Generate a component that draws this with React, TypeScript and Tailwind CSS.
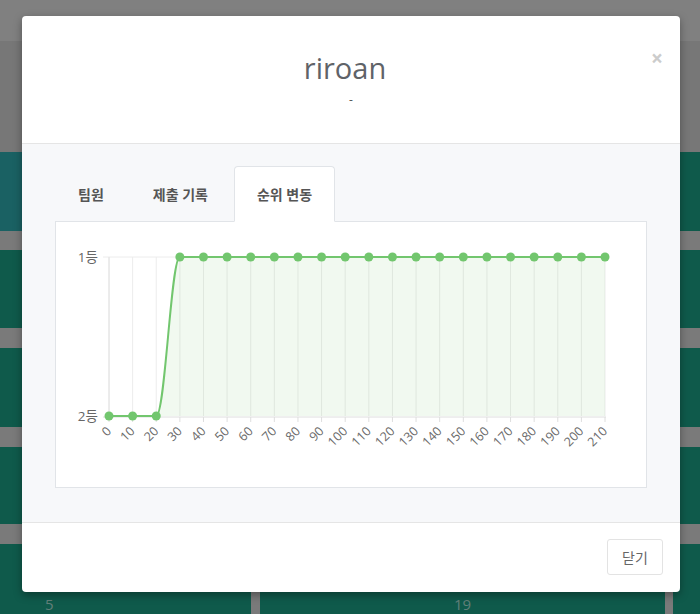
const ticks = Array.from({ length: 22 }, (_, i) => i * 10);
const xAt = (i: number) => 109 + i * 23.62;
const TOP = 257;
const BOT = 416;
const rankY = (i: number) => (i < 3 ? BOT : TOP);

const Cells = ({ first, label }: { first?: boolean; label?: [string, string] }) => (
  <div className="flex gap-[9px] h-full">
    <div className={`w-[251px] h-full ${first ? 'bg-[#1a6163]' : 'bg-[#0f5a4b]'} pl-[45px] pt-[50px] text-[15px] leading-[20px] text-[#62807a]`}>
      {label?.[0]}
    </div>
    <div className="w-[405px] h-full bg-[#0f5a4b] pt-[50px] text-center text-[15px] leading-[20px] text-[#62807a]">
      {label?.[1]}
    </div>
    <div className="ml-[-1px] flex-1 h-full bg-[#0f5a4b]" />
  </div>
);

const RankChart = () => {
  const pts = ticks.map((_, i) => [xAt(i), rankY(i)] as const);
  const x2 = xAt(2);
  const x3 = xAt(3);
  const curve =
    `M${pts[0][0]},${BOT} L${pts[1][0]},${BOT} L${x2},${BOT} ` +
    `C${x2 + 9},${BOT} ${x3 - 9},${TOP} ${x3},${TOP} ` +
    pts.slice(4).map(([x, y]) => `L${x},${y}`).join(' ');
  const area = `${curve} L${xAt(21)},${BOT} L${xAt(0)},${BOT} Z`;

  return (
    <svg width="590" height="265" viewBox="56 222 590 265" className="block">
      {ticks.map((_, i) => (
        <line key={i} x1={xAt(i)} x2={xAt(i)} y1={TOP} y2={BOT} stroke="#ececec" />
      ))}
      <line x1={103} x2={xAt(21)} y1={TOP} y2={TOP} stroke="#ececec" />
      <path d={area} fill="#72c66e" fillOpacity={0.1} />
      <line x1={109} x2={109} y1={TOP} y2={BOT + 1} stroke="#e2e2e2" />
      <line x1={103} x2={xAt(21) + 1} y1={BOT + 1} y2={BOT + 1} stroke="#dedede" />
      {ticks.map((_, i) => (
        <line key={i} x1={xAt(i)} x2={xAt(i)} y1={BOT + 1} y2={BOT + 6} stroke="#dedede" />
      ))}
      <path d={curve} fill="none" stroke="#72c66e" strokeWidth={2} />
      {pts.map(([x, y], i) => (
        <circle key={i} cx={x} cy={y} r={4.5} fill="#72c66e" />
      ))}
      <text x={98} y={TOP + 4.5} textAnchor="end" fontSize={13.5} fill="#666">1등</text>
      <text x={98} y={BOT + 4.5} textAnchor="end" fontSize={13.5} fill="#666">2등</text>
      {ticks.map((t, i) => (
        <text
          key={t}
          x={xAt(i) + 3}
          y={432}
          textAnchor="end"
          fontSize={12.5}
          fill="#6a6a6a"
          transform={`rotate(-45 ${xAt(i) + 3} 432)`}
        >
          {t}
        </text>
      ))}
    </svg>
  );
};

export default function App() {
  return (
    <div className="relative w-[700px] h-[614px] overflow-hidden font-['Open_Sans','Noto_Sans_CJK_KR',sans-serif]">
      <div className="flex flex-col h-full bg-[#7a7a7a]">
        <div className="h-[41px] bg-[#808080]" />
        <div className="h-[112px] bg-[#777777]" />
        <div className="h-[79px]"><Cells first /></div>
        <div className="h-[19px]" />
        <div className="h-[79px]"><Cells /></div>
        <div className="h-[20px]" />
        <div className="h-[79px]"><Cells /></div>
        <div className="h-[20px]" />
        <div className="h-[78px]"><Cells /></div>
        <div className="h-[20px]" />
        <div className="flex-1"><Cells label={['5', '19']} /></div>
      </div>

      <div className="absolute left-[22px] top-[16px] w-[658px] h-[576px] bg-white rounded-[4px] shadow-[0_3px_9px_rgba(0,0,0,0.35)] overflow-hidden flex flex-col">
        <div className="relative h-[128px] border-b border-[#e5e5e5] pt-[35px] text-center">
          <div className="pr-[12px] text-[29px] leading-[34px] text-[#5f6368]">riroan</div>
          <div className="mt-[7px] text-[12px] leading-[16px] text-[#555]">-</div>
          <span className="absolute right-[17px] top-[32px] text-[21px] font-bold leading-[1] text-[#cccccc]">×</span>
        </div>

        <div className="h-[378px] bg-[#f7f8fa] pt-[22px] px-[33px]">
          <div className="flex gap-[3px] -mb-px relative">
            <div className="h-[56px] px-[22px] flex items-center border border-transparent text-[14px] font-bold text-[#555]">팀원</div>
            <div className="h-[56px] px-[22px] flex items-center border border-transparent text-[14px] font-bold text-[#555]">제출 기록</div>
            <div className="h-[56px] px-[22px] flex items-center border border-[#e1e4e8] border-b-white bg-white rounded-t-[4px] text-[14px] font-bold text-[#555]">순위 변동</div>
          </div>
          <div className="h-[267px] bg-white border border-[#e1e4e8]">
            <RankChart />
          </div>
        </div>

        <div className="flex-1 border-t border-[#e5e5e5] flex justify-end pt-[16px] pr-[17px]">
          <button className="w-[56px] h-[36px] border border-[#e3e3e3] rounded-[3px] bg-white text-[14px] text-[#666]">닫기</button>
        </div>
      </div>
    </div>
  );
}
